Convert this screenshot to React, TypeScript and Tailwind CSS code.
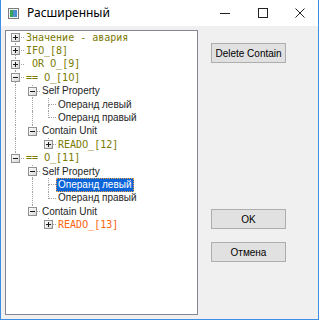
import React from "react";

type Node = {
  label: string;
  big?: boolean;
  color?: string;
  expander?: "plus" | "minus";
  selected?: boolean;
  children?: Node[];
};

const tree: Node[] = [
  { label: "Значение - авария", big: true, expander: "plus" },
  { label: "IF0_[8]", big: true, expander: "plus" },
  { label: " OR 0_[9]", big: true, expander: "plus" },
  {
    label: "== 0_[10]",
    big: true,
    expander: "minus",
    children: [
      {
        label: "Self Property",
        expander: "minus",
        children: [{ label: "Операнд левый" }, { label: "Операнд правый" }],
      },
      {
        label: "Contain Unit",
        expander: "minus",
        children: [{ label: "READ0_[12]", big: true, expander: "plus" }],
      },
    ],
  },
  {
    label: "== 0_[11]",
    big: true,
    expander: "minus",
    children: [
      {
        label: "Self Property",
        expander: "minus",
        children: [
          { label: "Операнд левый", selected: true },
          { label: "Операнд правый" },
        ],
      },
      {
        label: "Contain Unit",
        expander: "minus",
        children: [
          { label: "READ0_[13]", big: true, color: "orange", expander: "plus" },
        ],
      },
    ],
  },
];

type Row = {
  node: Node;
  level: number;
  ancestorsLast: boolean[];
  last: boolean;
  first: boolean;
};

function flatten(nodes: Node[], level: number, ancestorsLast: boolean[], out: Row[]) {
  nodes.forEach((node, i) => {
    const last = i === nodes.length - 1;
    out.push({ node, level, ancestorsLast, last, first: level === 0 && i === 0 });
    if (node.children) flatten(node.children, level + 1, [...ancestorsLast, last], out);
  });
  return out;
}

// the mono font has a dotted zero, the original one is plain
function MonoLabel({ text }: { text: string }) {
  const parts = text.split("0");
  return (
    <>
      {parts.map((p, i) => (
        <React.Fragment key={i}>
          {p}
          {i < parts.length - 1 && (
            <span className="inline-block w-[6.02px] text-center font-['DejaVu_Sans',sans-serif]">0</span>
          )}
        </React.Fragment>
      ))}
    </>
  );
}

function Expander({ kind }: { kind: "plus" | "minus" }) {
  return (
    <span className="absolute left-[4px] top-[2px] w-[9px] h-[9px] border border-[#919191] bg-gradient-to-br from-white to-[#d8d8d8]">
      <span className="absolute left-[1px] top-[3px] w-[5px] h-[1px] bg-[#1c1c1c]" />
      {kind === "plus" && (
        <span className="absolute left-[3px] top-[1px] w-[1px] h-[5px] bg-[#1c1c1c]" />
      )}
    </span>
  );
}

function TreeRow({ row }: { row: Row }) {
  const { node, level, ancestorsLast, last, first } = row;
  return (
    <div className="flex h-[13.4px]">
      {ancestorsLast.map((l, i) => (
        <div key={i} className={i === 0 ? "relative shrink-0 w-[17px]" : "relative shrink-0 w-[16px]"}>
          {!l && (
            <span className="absolute left-[8px] top-0 bottom-0 border-l border-dotted border-[#a0a0a0]" />
          )}
        </div>
      ))}
      <div className={level === 0 ? "relative shrink-0 w-[17px]" : "relative shrink-0 w-[16px]"}>
        {!first && (
          <span className="absolute left-[8px] top-0 h-[7px] border-l border-dotted border-[#a0a0a0]" />
        )}
        {!last && (
          <span className="absolute left-[8px] top-[7px] bottom-0 border-l border-dotted border-[#a0a0a0]" />
        )}
        <span className="absolute left-[8px] right-0 top-[6px] border-t border-dotted border-[#a0a0a0]" />
        {node.expander && <Expander kind={node.expander} />}
      </div>
      <div
        className={
          node.selected
            ? "flex items-center px-[2px] bg-[#0a64d8] text-white outline outline-1 outline-dotted outline-[#f0a040] -outline-offset-1"
            : "flex items-center px-[2px]"
        }
      >
        {node.big ? (
          <span
            className={
              node.color === "orange"
                ? "whitespace-pre font-['DejaVu_Sans_Mono',monospace] text-[10px] leading-none text-[#ff6410]"
                : "whitespace-pre font-['DejaVu_Sans_Mono',monospace] text-[10px] leading-none text-[#7a7a00]"
            }
          >
            <MonoLabel text={node.label} />
          </span>
        ) : (
          <span
            className={
              node.selected
                ? "whitespace-pre font-['Liberation_Sans',Arial,sans-serif] text-[10px] leading-none text-white"
                : "whitespace-pre font-['Liberation_Sans',Arial,sans-serif] text-[10px] leading-none text-[#1e1e1e]"
            }
          >
            {node.label}
          </span>
        )}
      </div>
    </div>
  );
}

function WinButton({ children, className }: { children: React.ReactNode; className?: string }) {
  return (
    <button
      className={`w-[75px] h-[20px] bg-[#e1e1e1] border border-[#adadad] text-[10px] text-black font-['Liberation_Sans',Arial,sans-serif] flex items-center justify-center ${className ?? ""}`}
    >
      {children}
    </button>
  );
}

export default function App() {
  const rows = flatten(tree, 0, [], []);
  return (
    <div className="w-[319px] h-[320px] flex flex-col border-l border-r border-b border-[#3c8fe4] bg-white overflow-hidden">
      <div className="h-[26px] shrink-0 flex items-center bg-white">
        <svg width="11" height="11" viewBox="0 0 11 11" className="ml-[7px]">
          <rect x="0.5" y="0.5" width="10" height="10" fill="#f4f4f4" stroke="#7d7d7d" />
          <rect x="2" y="2" width="3" height="7" fill="#3aa35a" />
          <rect x="5" y="2" width="4" height="7" fill="#4a8fd0" />
        </svg>
        <span className="ml-[8px] text-[12px] text-black font-['Noto_Sans',sans-serif]">Расширенный</span>
        <span className="ml-auto w-[10px] h-[1px] bg-[#222]" />
        <span className="ml-[28px] w-[10px] h-[10px] border border-[#222]" />
        <svg width="10" height="10" viewBox="0 0 10 10" className="ml-[27px] mr-[13px]">
          <path d="M0.5 0.5 L9.5 9.5 M9.5 0.5 L0.5 9.5" stroke="#222" strokeWidth="1" />
        </svg>
      </div>
      <div className="flex flex-1 bg-[#f0f0f0]">
        <div className="ml-[4px] mt-[4px] w-[193px] h-[285px] border border-[#828790] bg-white pl-[1px] overflow-hidden">
          {rows.map((r, i) => (
            <TreeRow key={i} row={r} />
          ))}
        </div>
        <div className="ml-[13px] flex flex-col">
          <WinButton className="mt-[17px]">Delete Contain</WinButton>
          <WinButton className="mt-[146px]">OK</WinButton>
          <WinButton className="mt-[13px]">Отмена</WinButton>
        </div>
      </div>
    </div>
  );
}
